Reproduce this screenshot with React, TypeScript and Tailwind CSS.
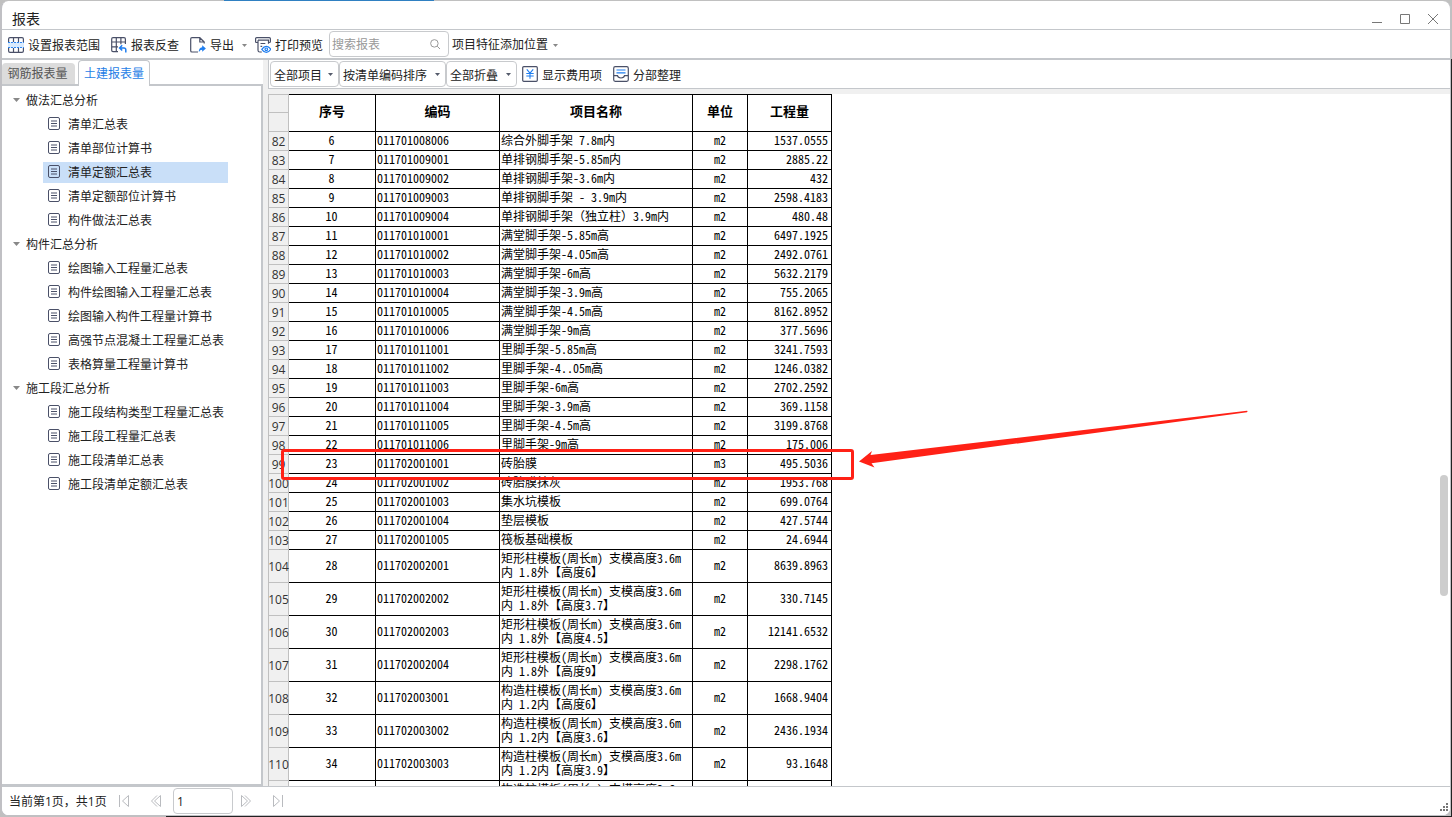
import React, { useState } from 'react';

type Row = [line: number, no: string, code: string, name: string, unit: string, amount: string];

const rows: Row[] = [
  [82, '6', '011701008006', '综合外脚手架 7.8m内', 'm2', '1537.0555'],
  [83, '7', '011701009001', '单排钢脚手架-5.85m内', 'm2', '2885.22'],
  [84, '8', '011701009002', '单排钢脚手架-3.6m内', 'm2', '432'],
  [85, '9', '011701009003', '单排钢脚手架 - 3.9m内', 'm2', '2598.4183'],
  [86, '10', '011701009004', '单排钢脚手架（独立柱）3.9m内', 'm2', '480.48'],
  [87, '11', '011701010001', '满堂脚手架-5.85m高', 'm2', '6497.1925'],
  [88, '12', '011701010002', '满堂脚手架-4.05m高', 'm2', '2492.0761'],
  [89, '13', '011701010003', '满堂脚手架-6m高', 'm2', '5632.2179'],
  [90, '14', '011701010004', '满堂脚手架-3.9m高', 'm2', '755.2065'],
  [91, '15', '011701010005', '满堂脚手架-4.5m高', 'm2', '8162.8952'],
  [92, '16', '011701010006', '满堂脚手架-9m高', 'm2', '377.5696'],
  [93, '17', '011701011001', '里脚手架-5.85m高', 'm2', '3241.7593'],
  [94, '18', '011701011002', '里脚手架-4..05m高', 'm2', '1246.0382'],
  [95, '19', '011701011003', '里脚手架-6m高', 'm2', '2702.2592'],
  [96, '20', '011701011004', '里脚手架-3.9m高', 'm2', '369.1158'],
  [97, '21', '011701011005', '里脚手架-4.5m高', 'm2', '3199.8768'],
  [98, '22', '011701011006', '里脚手架-9m高', 'm2', '175.006'],
  [99, '23', '011702001001', '砖胎膜', 'm3', '495.5036'],
  [100, '24', '011702001002', '砖胎膜抹灰', 'm2', '1953.768'],
  [101, '25', '011702001003', '集水坑模板', 'm2', '699.0764'],
  [102, '26', '011702001004', '垫层模板', 'm2', '427.5744'],
  [103, '27', '011702001005', '筏板基础模板', 'm2', '24.6944'],
  [104, '28', '011702002001', '矩形柱模板(周长m) 支模高度3.6m\n内 1.8外【高度6】', 'm2', '8639.8963'],
  [105, '29', '011702002002', '矩形柱模板(周长m) 支模高度3.6m\n内 1.8外【高度3.7】', 'm2', '330.7145'],
  [106, '30', '011702002003', '矩形柱模板(周长m) 支模高度3.6m\n内 1.8外【高度4.5】', 'm2', '12141.6532'],
  [107, '31', '011702002004', '矩形柱模板(周长m) 支模高度3.6m\n内 1.8外【高度9】', 'm2', '2298.1762'],
  [108, '32', '011702003001', '构造柱模板(周长m) 支模高度3.6m\n内 1.2内【高度6】', 'm2', '1668.9404'],
  [109, '33', '011702003002', '构造柱模板(周长m) 支模高度3.6m\n内 1.2内【高度3.6】', 'm2', '2436.1934'],
  [110, '34', '011702003003', '构造柱模板(周长m) 支模高度3.6m\n内 1.2内【高度3.9】', 'm2', '93.1648'],
];

const tree = [
  { title: '做法汇总分析', items: ['清单汇总表', '清单部位计算书', '清单定额汇总表', '清单定额部位计算书', '构件做法汇总表'] },
  { title: '构件汇总分析', items: ['绘图输入工程量汇总表', '构件绘图输入工程量汇总表', '绘图输入构件工程量计算书', '高强节点混凝土工程量汇总表', '表格算量工程量计算书'] },
  { title: '施工段汇总分析', items: ['施工段结构类型工程量汇总表', '施工段工程量汇总表', '施工段清单汇总表', '施工段清单定额汇总表'] },
];

const Icon = ({ className = 'size-4', children }: { className?: string; children: React.ReactNode }) => (
  <svg viewBox="0 0 16 16" fill="none" stroke="#4a5068" strokeWidth="1.2" className={`shrink-0 ${className}`} aria-hidden="true">
    {children}
  </svg>
);

const RangeIcon = () => (
  <Icon>
    <path d="M.6 5V2Q.6.7 2 .7h12q1.4 0 1.4 1.3v3M.6 11v3q0 1.3 1.4 1.3h12q1.4 0 1.4-1.3v-3M5.5.7V5M10.5.7V5M5.5 11v4.3M10.5 11v4.3" />
    <path d="M0 5h16v6H0z" fill="#d8eafd" stroke="none" />
    <path d="M0 5.500h16M0 10.500h16" stroke="#2f86f0" strokeWidth="1" strokeDasharray="2 1" />
  </Icon>
);

const TraceIcon = () => (
  <Icon>
    <path d="M7 14.6H2Q.7 14.6.7 13.3V2Q.7.7 2 .7h11q1.4 0 1.4 1.3v5M.7 5h13.7M.7 9.8H7M5.3.7v13.9M9.9.7v6.5" />
    <path d="M11.2 8.3 8.6 10.9l2.6 2.6M9 10.9h4q1.8 0 1.8 1.8v2.8" stroke="#1f7ef0" strokeWidth="1.5" />
  </Icon>
);

const ExportIcon = () => (
  <Icon>
    <path d="M8 15H2Q.7 15 .7 13.700V2Q.7.7 2 .7h7.800l4.400 4.300v1.500M9.800.9V5h4" />
    <path d="M8.800 15.200q-.2-4.500 3.400-5V8.200l3.700 3.300-3.700 3.300v-2q-2.200 0-3.400 2.400z" fill="#1f7ef0" stroke="none" />
  </Icon>
);

const PreviewIcon = () => (
  <Icon>
    <path d="M2.500 5.500H1.700Q.6 5.500.6 4.400V1.800Q.6.700 1.700.7h12.600q1.100 0 1.100 1.100v2.600q0 1.100-1.100 1.100h-.8M3 3.200h10.500v3.500M3 3.200v10q0 1.800 1.800 1.800h2M5.500 6.500h4.800M5.500 9.300h1.700" />
    <path d="M6.800 12.300q2-3 4.600-3t4.400 3q-1.800 3-4.400 3t-4.600-3z" stroke="#1f7ef0" fill="#fff" />
    <circle cx="11.300" cy="12.300" r="1.300" stroke="#1f7ef0" />
  </Icon>
);

const YuanIcon = () => (
  <Icon>
    <rect x=".7" y=".7" width="14.600" height="14.600" rx="1" />
    <path d="M4.800 3.300 8 7.200l3.200-3.900M8 7.200v5.600M4.300 7.500h7.400M4.300 10h7.400" stroke="#1f7ef0" strokeWidth="1.100" />
  </Icon>
);

const SortIcon = () => (
  <Icon>
    <rect x=".7" y=".7" width="14.600" height="14.600" rx="1.500" />
    <path d="M.7 9.700h3.800q.4 2.300 3.500 2.300t3.500-2.300h3.800" />
    <path d="M3.500 4h9M3.500 6.900h9" stroke="#1f7ef0" />
  </Icon>
);

const DocIcon = () => (
  <svg viewBox="0 0 12 13" fill="none" stroke="#4a5068" className="mb-0.5 h-[13px] w-3 shrink-0" aria-hidden="true">
    <rect x=".5" y=".5" width="11" height="12" rx="1.500" />
    <path d="M3 4h6M3 6.500h6M3 9h6" />
  </svg>
);

const Caret = ({ className = 'fill-[#888]' }: { className?: string }) => (
  <svg viewBox="0 0 5 3" className={`h-[3px] w-[5px] shrink-0 ${className}`} aria-hidden="true">
    <path d="M0 0h5L2.500 3z" />
  </svg>
);

const ToolButton = ({ icon, label }: { icon: React.ReactNode; label: string }) => (
  <button type="button" className="flex items-center gap-1 whitespace-nowrap">
    {icon}
    <span className="pt-0.5">{label}</span>
  </button>
);

const ToolSelect = ({ label, className }: { label: string; className: string }) => (
  <div className={`relative h-[26px] ${className}`}>
    <select aria-label={label} className="h-full w-full appearance-none rounded border border-[#c8cacd] bg-white pt-0.5 pl-[3px] text-xs outline-none">
      <option>{label}</option>
    </select>
    <Caret className="pointer-events-none absolute top-3 right-1.5 fill-[#555b6b]" />
  </div>
);

const PageButton = ({ label, d }: { label: string; d: string }) => (
  <button type="button" aria-label={label}>
    <svg viewBox="0 0 12 14" fill="none" stroke="#b9bbbf" className="h-3.5 w-3">
      <path d={d} />
    </svg>
  </button>
);

const TitleBar = () => (
  <header className="flex h-7 shrink-0 items-center justify-between pt-2 pr-3 pl-2.5">
    <h1 className="text-sm">报表</h1>
    <div className="flex items-center gap-[18px]">
      {[
        ['最小化', 'M0 8.500h10'],
        ['最大化', 'M.5.500h9v9h-9z'],
        ['关闭', 'M0 0l10 10M10 0 0 10'],
      ].map(([label, d]) => (
        <button key={label} type="button" aria-label={label}>
          <svg viewBox="0 0 10 10" fill="none" stroke="#777" className="size-2.5">
            <path d={d} />
          </svg>
        </button>
      ))}
    </div>
  </header>
);

const MainToolbar = () => (
  <div className="flex h-[31px] shrink-0 items-center border-t border-b-2 border-[#c4c7cb] pl-1.5">
    <div className="flex items-center gap-[11px] pt-px">
      <ToolButton icon={<RangeIcon />} label="设置报表范围" />
      <ToolButton icon={<TraceIcon />} label="报表反查" />
      <ToolButton icon={<ExportIcon />} label="导出" />
    </div>
    <Caret className="mx-2 mt-0.5 fill-[#888]" />
    <div className="pt-px">
      <ToolButton icon={<PreviewIcon />} label="打印预览" />
    </div>
    <label className="ml-1.5 flex h-[26px] w-[120px] items-center rounded border border-[#c8cacd] pr-2 pl-0.5">
      <input aria-label="搜索报表" placeholder="搜索报表" className="w-0 min-w-0 flex-1 pt-0.5 outline-none placeholder:text-[#999]" />
      <Icon className="size-2.5">
        <circle cx="7" cy="7" r="6" stroke="#999" strokeWidth="1.600" />
        <path d="M11.500 11.500 16 16" stroke="#999" strokeWidth="1.600" />
      </Icon>
    </label>
    <button type="button" className="ml-[3px] flex items-center gap-[5px] pt-0.5 whitespace-nowrap">
      项目特征添加位置
      <Caret />
    </button>
  </div>
);

const ReportTree = () => {
  const [selected, setSelected] = useState('清单定额汇总表');

  return (
    <aside className="flex w-[261px] shrink-0 flex-col">
      <div role="tablist" className="flex h-6 items-end">
        <button type="button" role="tab" aria-selected="false" className="h-[21px] w-[73px] rounded-t bg-[#dcdcdc] pr-0.5 text-[#555]">
          钢筋报表量
        </button>
        <button
          type="button"
          role="tab"
          aria-selected="true"
          className="z-10 -mb-0.5 ml-[3px] h-[26px] w-[72px] rounded-t border border-b-0 border-[#c4c7cb] bg-white text-[#1f7ee6]"
        >
          土建报表量
        </button>
      </div>
      <nav className="min-h-0 flex-1 overflow-hidden border-y-2 border-r-2 border-[#c4c7cb] pt-0.5">
        {tree.map((group) => (
          <section key={group.title}>
            <h2 className="flex h-6 items-center gap-1.5 pl-[11px]">
              <svg viewBox="0 0 7 4" className="h-1 w-[7px] fill-[#888]" aria-hidden="true">
                <path d="M0 0h7L3.500 4z" />
              </svg>
              <span className="pt-0.5">{group.title}</span>
            </h2>
            <ul>
              {group.items.map((item) => (
                <li key={item} className="flex h-6 items-center pl-[41px]">
                  <button
                    type="button"
                    onClick={() => setSelected(item)}
                    className={`flex h-[21px] w-[185px] items-center gap-2 pl-[5px] text-left whitespace-nowrap ${item === selected ? 'bg-[#c9dff8]' : ''}`}
                  >
                    <DocIcon />
                    <span className="pt-0.5">{item}</span>
                  </button>
                </li>
              ))}
            </ul>
          </section>
        ))}
      </nav>
    </aside>
  );
};

const lineCell = 'border-r border-b border-[#c0c0c0] bg-[#f0f0f0] p-0';
const headCell = 'border-t border-r border-b border-black p-0 pb-1 text-[13px] font-bold';
const bodyCell = 'border-r border-b border-black p-0 pb-0.5';

// hwid would narrow the full-width brackets too, so they keep the normal glyphs
const wideBrackets = (text: string) =>
  text.split(/([（）])/).map((part, i) =>
    i % 2 ? <span key={i} className="[font-feature-settings:normal]">{part}</span> : part
  );

const ReportTable = () => (
  <table className="w-[564px] shrink-0 table-fixed border-separate border-spacing-0 self-start border-l border-[#c0c0c0] text-xs text-black">
    <colgroup>
      <col className="w-5" />
      <col className="w-[87px]" />
      <col className="w-[124px]" />
      <col className="w-[193px]" />
      <col className="w-[55px]" />
      <col className="w-[84px]" />
    </colgroup>
    <thead>
      <tr className="h-[19px]">
        <td className={`border-t ${lineCell}`} />
        <th rowSpan={2} className={headCell}>序号</th>
        <th rowSpan={2} className={headCell}>编码</th>
        <th rowSpan={2} className={headCell}>项目名称</th>
        <th rowSpan={2} className={headCell}>单位</th>
        <th rowSpan={2} className={headCell}>工程量</th>
      </tr>
      <tr className="h-[19px]">
        <td className={lineCell} />
      </tr>
    </thead>
    <tbody className="leading-[14px] [font-feature-settings:'hwid']">
      {rows.map(([line, no, code, name, unit, amount]) => (
        <tr key={line} className={name.includes('\n') ? 'h-[33px]' : 'h-[19px]'}>
          <th scope="row" className={`${lineCell} font-['Open_Sans',sans-serif] font-normal text-[#333]`}>
            <span className="flex justify-center pt-0.5">{line}</span>
          </th>
          <td className={`${bodyCell} pr-px text-center`}>{no}</td>
          <td className={`${bodyCell} pl-px`}>{code}</td>
          <td className={`${bodyCell} pl-px whitespace-pre`}>{wideBrackets(name)}</td>
          <td className={`${bodyCell} text-center`}>{unit}</td>
          <td className={`${bodyCell} pr-[3px] text-right`}>{amount}</td>
        </tr>
      ))}
      <tr className="h-[33px] align-top">
        <td className={lineCell} />
        <td className={bodyCell} />
        <td className={bodyCell} />
        <td className={`${bodyCell} pt-px pl-px whitespace-pre`}>构造柱模板(周长m) 支模高度3.6m</td>
        <td className={bodyCell} />
        <td className={bodyCell} />
      </tr>
    </tbody>
  </table>
);

const ReportView = () => (
  <main className="flex min-w-0 flex-1 flex-col">
    <div className="flex h-[29px] shrink-0 items-center border-b border-l border-[#c4c7cb] bg-white pl-px">
      <ToolSelect label="全部项目" className="w-[69px]" />
      <ToolSelect label="按清单编码排序" className="w-[107px]" />
      <ToolSelect label="全部折叠" className="w-[71px]" />
      <div className="ml-[5px] flex items-center gap-[11px]">
        <ToolButton icon={<YuanIcon />} label="显示费用项" />
        <ToolButton icon={<SortIcon />} label="分部整理" />
      </div>
    </div>
    <div className="relative mt-[5px] flex min-h-0 flex-1 justify-between overflow-hidden bg-white">
      <ReportTable />
      <div className="flex w-2.5 flex-col">
        <div className="grow-2" />
        <div className="h-[121px] w-2 rounded-full bg-[#cdcdcd]" />
        <div className="grow" />
      </div>

      {/* review mark on row 99 */}
      <div className="absolute top-[355px] left-[13px] h-[31px] w-[573px] rounded-[3px] border-3 border-[#ff2116]" />
      <svg viewBox="0 0 390 58" className="absolute top-[316px] left-[590px] h-[58px] w-[390px] fill-[#ff2116]" aria-hidden="true">
        <path d="M1 51.500 14 41l-1.500 4L389 .8q1 .7 0 1.400L13.500 53.300 16.500 57.500z" />
      </svg>
    </div>
  </main>
);

const Footer = () => (
  <footer className="flex h-[29px] shrink-0 items-center border-t border-[#c4c7cb] bg-white pl-[7px]">
    <span className="w-[109px] pt-0.5 whitespace-nowrap">当前第1页，共1页</span>
    <div className="flex items-center">
      <PageButton label="首页" d="M1.500 1v12M10.500 1.500v11L4.500 7z" />
      <span className="w-5" />
      <PageButton label="上一页" d="M7 1.500 1.500 7 7 12.500M10.500 1.500v11L4.500 7z" />
      <input aria-label="页码" defaultValue="1" className="mr-[7px] ml-[11px] h-[26px] w-[60px] rounded border border-[#c8cacd] pl-[3px] outline-none" />
      <PageButton label="下一页" d="M5 1.500 10.500 7 5 12.500M1.500 1.500v11L7.500 7z" />
      <span className="w-5" />
      <PageButton label="末页" d="M10.500 1v12M1.500 1.500v11L7.500 7z" />
    </div>
    <svg viewBox="0 0 8 8" className="mt-3 mr-0.5 ml-auto size-2 fill-[#777]" aria-hidden="true">
      <path d="M6 0h2v2H6zM3 3h2v2H3zM6 3h2v2H6zM0 6h2v2H0zM3 6h2v2H3zM6 6h2v2H6z" />
    </svg>
  </footer>
);

const App = () => (
  <div className="flex h-screen w-full flex-col bg-[#c0c0c0] font-['Open_Sans','Noto_Sans_CJK_SC',sans-serif] text-xs text-[#222]">
    <div className="flex h-px shrink-0">
      <div className="ml-56 w-[210px] bg-[#2f80c2]" />
    </div>
    <div className="flex min-h-0 flex-1">
      <div className="flex min-w-0 flex-1 flex-col overflow-hidden rounded-lg border-r border-b border-l-2 border-[#c0c0c4] bg-white">
        <TitleBar />
        <MainToolbar />
        <div className="flex min-h-0 flex-1">
          <ReportTree />
          <div className="flex min-w-0 flex-1 bg-[#f0f0f0] pl-[5px] font-['Noto_Sans_CJK_SC',sans-serif]">
            <ReportView />
          </div>
        </div>
        <Footer />
      </div>
      <div className="mt-[58px] w-px bg-[#222]" />
    </div>
    <div className="ml-[166px] h-px shrink-0 bg-[#222]" />
  </div>
);

export default App;
